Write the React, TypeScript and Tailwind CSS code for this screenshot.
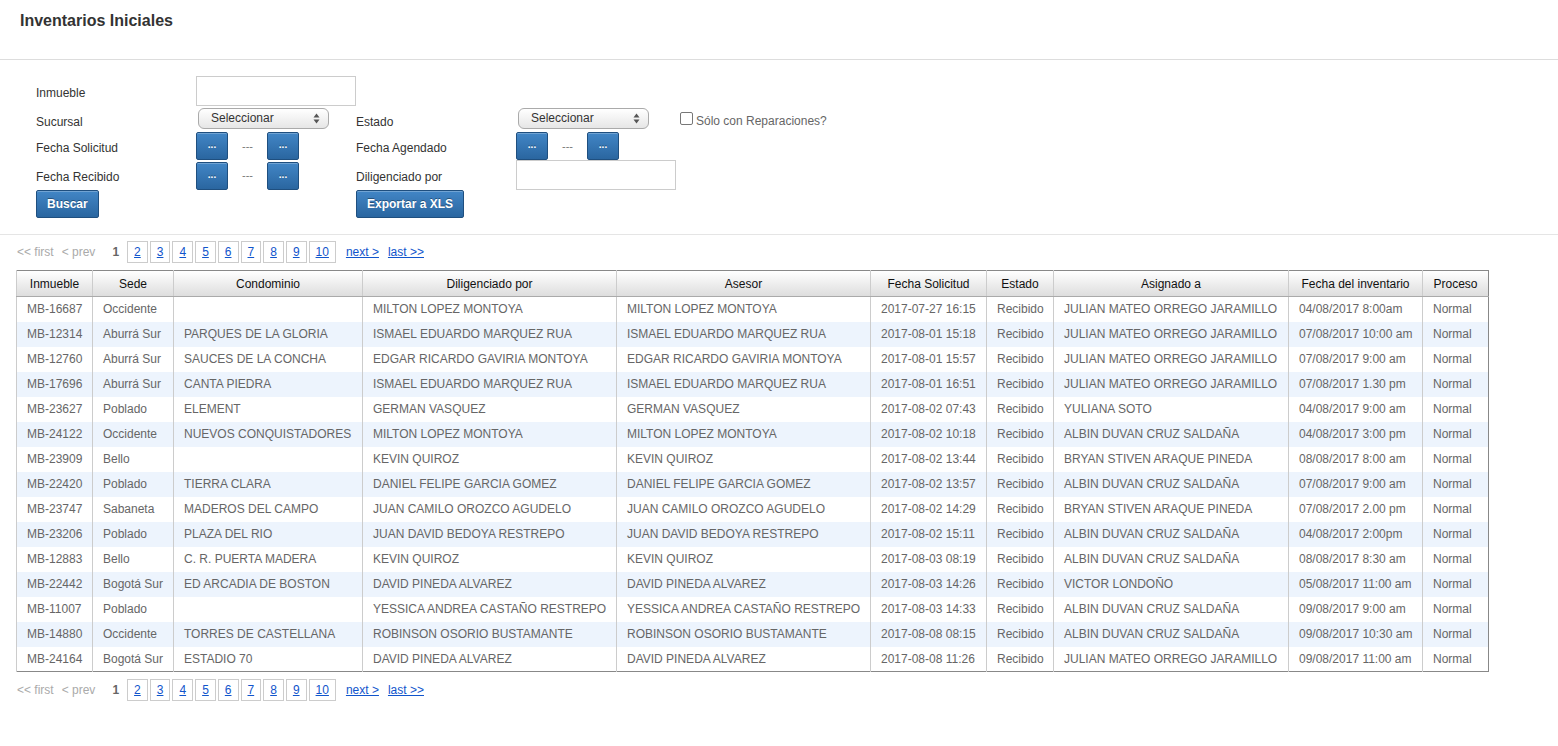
import React from 'react';

type Row = {
    inmueble: string;
    sede: string;
    condominio: string;
    diligenciado: string;
    fecha: string;
    asignado: string;
    inventario: string;
};

const rows: Row[] = [
    {inmueble: 'MB-16687', sede: 'Occidente', condominio: '', diligenciado: 'MILTON LOPEZ MONTOYA', fecha: '2017-07-27 16:15', asignado: 'JULIAN MATEO ORREGO JARAMILLO', inventario: '04/08/2017 8:00am'},
    {inmueble: 'MB-12314', sede: 'Aburrá Sur', condominio: 'PARQUES DE LA GLORIA', diligenciado: 'ISMAEL EDUARDO MARQUEZ RUA', fecha: '2017-08-01 15:18', asignado: 'JULIAN MATEO ORREGO JARAMILLO', inventario: '07/08/2017 10:00 am'},
    {inmueble: 'MB-12760', sede: 'Aburrá Sur', condominio: 'SAUCES DE LA CONCHA', diligenciado: 'EDGAR RICARDO GAVIRIA MONTOYA', fecha: '2017-08-01 15:57', asignado: 'JULIAN MATEO ORREGO JARAMILLO', inventario: '07/08/2017 9:00 am'},
    {inmueble: 'MB-17696', sede: 'Aburrá Sur', condominio: 'CANTA PIEDRA', diligenciado: 'ISMAEL EDUARDO MARQUEZ RUA', fecha: '2017-08-01 16:51', asignado: 'JULIAN MATEO ORREGO JARAMILLO', inventario: '07/08/2017 1.30 pm'},
    {inmueble: 'MB-23627', sede: 'Poblado', condominio: 'ELEMENT', diligenciado: 'GERMAN VASQUEZ', fecha: '2017-08-02 07:43', asignado: 'YULIANA SOTO', inventario: '04/08/2017 9:00 am'},
    {inmueble: 'MB-24122', sede: 'Occidente', condominio: 'NUEVOS CONQUISTADORES', diligenciado: 'MILTON LOPEZ MONTOYA', fecha: '2017-08-02 10:18', asignado: 'ALBIN DUVAN CRUZ SALDAÑA', inventario: '04/08/2017 3:00 pm'},
    {inmueble: 'MB-23909', sede: 'Bello', condominio: '', diligenciado: 'KEVIN QUIROZ', fecha: '2017-08-02 13:44', asignado: 'BRYAN STIVEN ARAQUE PINEDA', inventario: '08/08/2017 8:00 am'},
    {inmueble: 'MB-22420', sede: 'Poblado', condominio: 'TIERRA CLARA', diligenciado: 'DANIEL FELIPE GARCIA GOMEZ', fecha: '2017-08-02 13:57', asignado: 'ALBIN DUVAN CRUZ SALDAÑA', inventario: '07/08/2017 9:00 am'},
    {inmueble: 'MB-23747', sede: 'Sabaneta', condominio: 'MADEROS DEL CAMPO', diligenciado: 'JUAN CAMILO OROZCO AGUDELO', fecha: '2017-08-02 14:29', asignado: 'BRYAN STIVEN ARAQUE PINEDA', inventario: '07/08/2017 2.00 pm'},
    {inmueble: 'MB-23206', sede: 'Poblado', condominio: 'PLAZA DEL RIO', diligenciado: 'JUAN DAVID BEDOYA RESTREPO', fecha: '2017-08-02 15:11', asignado: 'ALBIN DUVAN CRUZ SALDAÑA', inventario: '04/08/2017 2:00pm'},
    {inmueble: 'MB-12883', sede: 'Bello', condominio: 'C. R. PUERTA MADERA', diligenciado: 'KEVIN QUIROZ', fecha: '2017-08-03 08:19', asignado: 'ALBIN DUVAN CRUZ SALDAÑA', inventario: '08/08/2017 8:30 am'},
    {inmueble: 'MB-22442', sede: 'Bogotá Sur', condominio: 'ED ARCADIA DE BOSTON', diligenciado: 'DAVID PINEDA ALVAREZ', fecha: '2017-08-03 14:26', asignado: 'VICTOR LONDOÑO', inventario: '05/08/2017 11:00 am'},
    {inmueble: 'MB-11007', sede: 'Poblado', condominio: '', diligenciado: 'YESSICA ANDREA CASTAÑO RESTREPO', fecha: '2017-08-03 14:33', asignado: 'ALBIN DUVAN CRUZ SALDAÑA', inventario: '09/08/2017 9:00 am'},
    {inmueble: 'MB-14880', sede: 'Occidente', condominio: 'TORRES DE CASTELLANA', diligenciado: 'ROBINSON OSORIO BUSTAMANTE', fecha: '2017-08-08 08:15', asignado: 'ALBIN DUVAN CRUZ SALDAÑA', inventario: '09/08/2017 10:30 am'},
    {inmueble: 'MB-24164', sede: 'Bogotá Sur', condominio: 'ESTADIO 70', diligenciado: 'DAVID PINEDA ALVAREZ', fecha: '2017-08-08 11:26', asignado: 'JULIAN MATEO ORREGO JARAMILLO', inventario: '09/08/2017 11:00 am'},
];

const headers: { label: string; width: string }[] = [
    {label: 'Inmueble', width: 'w-[76px]'},
    {label: 'Sede', width: 'w-[81px]'},
    {label: 'Condominio', width: 'w-[189px]'},
    {label: 'Diligenciado por', width: 'w-[254px]'},
    {label: 'Asesor', width: 'w-[254px]'},
    {label: 'Fecha Solicitud', width: 'w-[116px]'},
    {label: 'Estado', width: 'w-[67px]'},
    {label: 'Asignado a', width: 'w-[235px]'},
    {label: 'Fecha del inventario', width: 'w-[134px]'},
    {label: 'Proceso', width: 'w-[66px]'},
];

const btn = 'border border-[#1f4f7f] rounded-[2px] bg-gradient-to-b from-[#4286c6] to-[#2a66a0] text-white font-bold shadow-[inset_0_1px_0_rgba(255,255,255,0.25)] [text-shadow:0_-1px_0_rgba(0,0,0,0.35)]';

const DateButton = () => (
    <button className={`${btn} w-[32px] h-[28px] text-[10px] leading-none pb-[2px]`}>...</button>
);

const DateRange = () => (
    <div className="flex items-center">
        <DateButton/>
        <span className="w-[39px] text-center text-[#777] text-[11px]">---</span>
        <DateButton/>
    </div>
);

const SelectBox = () => (
    <div
        className="ml-[2px] w-[131px] h-[21px] rounded-[6px] border border-[#aaa] bg-gradient-to-b from-white to-[#e6e6e6] flex items-center justify-between pl-[12px] pr-[8px] text-[12px] text-[#333]">
        <span className="-mt-[2px]">Seleccionar</span>
        <svg width="7" height="11" viewBox="0 0 7 11">
            <path d="M3.5 0.5 L6.5 4.5 L0.5 4.5 Z" fill="#555"/>
            <path d="M3.5 10.5 L6.5 6.5 L0.5 6.5 Z" fill="#555"/>
        </svg>
    </div>
);

const Pagination = () => (
    <div className="flex items-center h-[22px] pl-[17px] text-[12px]">
        <span className="text-[#aaa]">&lt;&lt; first</span>
        <span className="text-[#aaa] ml-[8px]">&lt; prev</span>
        <span className="font-bold text-[#666] ml-[17px] mr-[8px]">1</span>
        <div className="flex gap-[2px]">
            {[2, 3, 4, 5, 6, 7, 8, 9, 10].map(n => (
                <a key={n}
                   className="h-[22px] border border-[#ccc] px-[6px] flex items-center text-[#15c] underline">
                    {n}
                </a>
            ))}
        </div>
        <a className="ml-[10px] text-[#15c] underline">next &gt;</a>
        <a className="ml-[9px] text-[#15c] underline">last &gt;&gt;</a>
    </div>
);

const Label = ({children, className = ''}: { children: React.ReactNode; className?: string }) => (
    <div className={`flex items-center text-[12px] text-[#333] ${className}`}>{children}</div>
);

export default function App() {
    return (
        <div className="min-h-screen bg-white font-['Liberation_Sans',Arial,sans-serif]">
            <div className="h-[60px] border-b border-[#ddd] pl-[20px] pt-[9px]">
                <h1 className="text-[16px] font-bold text-[#333]">Inventarios Iniciales</h1>
            </div>

            {/* filtros */}
            <div className="pt-[16px] pl-[36px] pb-[16px] border-b border-[#e5e5e5]">
                <div className="grid grid-cols-[160px_160px_160px_164px_auto] grid-rows-[30px_25px_30px_29px_28px]">
                    <Label className="pt-[4px]">Inmueble</Label>
                    <div><input className="w-[160px] h-[30px] border border-[#ccc] outline-none"/></div>
                    <div/>
                    <div/>
                    <div/>

                    <Label className="pt-[6px]">Sucursal</Label>
                    <div className="flex items-center"><SelectBox/></div>
                    <Label className="pt-[6px]">Estado</Label>
                    <div className="flex items-center"><SelectBox/></div>
                    <div className="flex items-center pt-[2px]">
                        <span className="w-[13px] h-[13px] border border-[#777] rounded-[2px] bg-white -mt-[2px]"/>
                        <span className="ml-[3px] text-[12px] text-[#666] mt-[2px]">Sólo con Reparaciones?</span>
                    </div>

                    <Label className="pt-[4px]">Fecha Solicitud</Label>
                    <DateRange/>
                    <Label className="pt-[4px]">Fecha Agendado</Label>
                    <DateRange/>
                    <div/>

                    <Label className="pt-[2px]">Fecha Recibido</Label>
                    <DateRange/>
                    <Label className="pt-[2px]">Diligenciado por</Label>
                    <div><input className="-mt-[1px] w-[160px] h-[30px] border border-[#ccc] outline-none"/></div>
                    <div/>

                    <div><button className={`${btn} h-[28px] px-[10px] text-[12px]`}>Buscar</button></div>
                    <div/>
                    <div><button className={`${btn} h-[28px] px-[10px] text-[12px]`}>Exportar a XLS</button></div>
                    <div/>
                    <div/>
                </div>
            </div>

            <div className="pt-[6px]">
                <Pagination/>
            </div>

            <div className="pl-[16px] pt-[7px] pb-[1px]">
                <table className="table-fixed border-collapse border border-[#888] text-[12px] w-[1472px]">
                    <colgroup>
                        {headers.map(h => <col key={h.label} className={h.width}/>)}
                    </colgroup>
                    <thead>
                    <tr className="h-[26px] bg-gradient-to-b from-white to-[#dcdcdc]">
                        {headers.map(h => (
                            <th key={h.label}
                                className="font-normal text-[#111] border-b border-b-[#aaa] border-l border-l-[#ccc] text-center">
                                {h.label}
                            </th>
                        ))}
                    </tr>
                    </thead>
                    <tbody>
                    {rows.map((r, i) => (
                        <tr key={r.inmueble} className={`h-[25px] ${i % 2 === 1 ? 'bg-[#edf4fd]' : 'bg-white'}`}>
                            {[r.inmueble, r.sede, r.condominio, r.diligenciado, r.diligenciado, r.fecha, 'Recibido', r.asignado, r.inventario, 'Normal'].map((v, j) => (
                                <td key={j}
                                    className="border-l border-l-[#ccc] px-[10px] text-[#666] whitespace-nowrap overflow-hidden">
                                    {v}
                                </td>
                            ))}
                        </tr>
                    ))}
                    </tbody>
                </table>
            </div>

            <div className="pt-[6px]">
                <Pagination/>
            </div>
        </div>
    );
}
